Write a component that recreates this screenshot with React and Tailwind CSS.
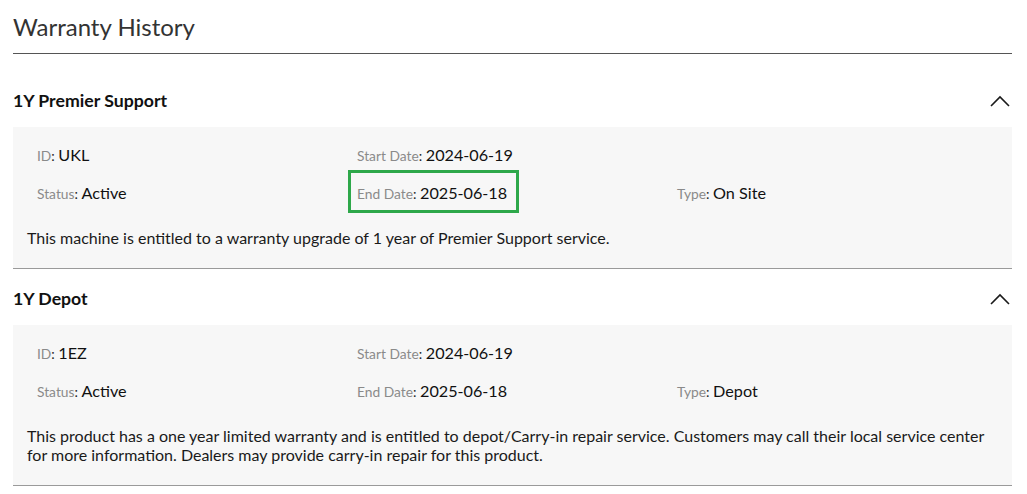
import React from 'react';

const warranties = [
  {
    name: '1Y Premier Support',
    id: 'UKL',
    status: 'Active',
    start: '2024-06-19',
    end: '2025-06-18',
    type: 'On Site',
    highlightEnd: true,
    description:
      'This machine is entitled to a warranty upgrade of 1 year of Premier Support service.',
  },
  {
    name: '1Y Depot',
    id: '1EZ',
    status: 'Active',
    start: '2024-06-19',
    end: '2025-06-18',
    type: 'Depot',
    highlightEnd: false,
    description:
      'This product has a one year limited warranty and is entitled to depot/Carry-in repair service. Customers may call their local service center for more information. Dealers may provide carry-in repair for this product.',
  },
];

const Field = ({ label, value, highlight = false }) => (
  <div className="relative h-[22px] leading-[22px] whitespace-nowrap">
    <span className="text-[13.8px] text-[#8a8a8a]">{label}</span>
    <span className="text-[13.8px] text-[#222]">: </span>
    <span className="text-[16.2px] text-[#111]">{value}</span>
    {highlight && (
      <div className="absolute -left-[9px] -top-[12px] w-[171px] h-[43px] border-[3px] border-[#2ea84a] pointer-events-none" />
    )}
  </div>
);

const Chevron = () => (
  <svg width="20" height="12" viewBox="0 0 20 12" fill="none">
    <path d="M1 11 L10 2 L19 11" stroke="#1a1a1a" strokeWidth="1.6" />
  </svg>
);

const WarrantyItem = ({ item, first }) => (
  <div className={first ? 'mt-[17px]' : ''}>
    {/* Header */}
    <div className="flex items-center justify-between pt-[18px] pb-[14px] pr-[2px]">
      <h3 className="text-[17.7px] font-bold leading-[24px] text-[#111]">{item.name}</h3>
      <Chevron />
    </div>

    {/* Details */}
    <div className="bg-[#f7f7f7] border-b border-[#9a9a9a] px-[14px] pt-[17px] pb-[21px]">
      <div className="pl-[10px] grid grid-cols-[320px_320px_1fr] gap-y-[16px]">
        <Field label="ID" value={item.id} />
        <Field label="Start Date" value={item.start} />
        <div />
        <Field label="Status" value={item.status} />
        <Field label="End Date" value={item.end} highlight={item.highlightEnd} />
        <Field label="Type" value={item.type} />
      </div>
      <p className="mt-[24px] text-[16px] leading-[19px] text-[#1a1a1a]">
        {item.description}
      </p>
    </div>
  </div>
);

export default function App() {
  return (
    <div
      className="min-h-screen bg-white pl-[13px] pr-[15px]"
      style={{ fontFamily: 'Lato, "Open Sans", sans-serif' }}
    >
      <div className="border-b border-[#555] pt-[11px] pb-[10px]">
        <h2 className="text-[24px] leading-[32px] text-[#333]">Warranty History</h2>
      </div>
      {warranties.map((w, i) => (
        <WarrantyItem key={w.name} item={w} first={i === 0} />
      ))}
    </div>
  );
}
